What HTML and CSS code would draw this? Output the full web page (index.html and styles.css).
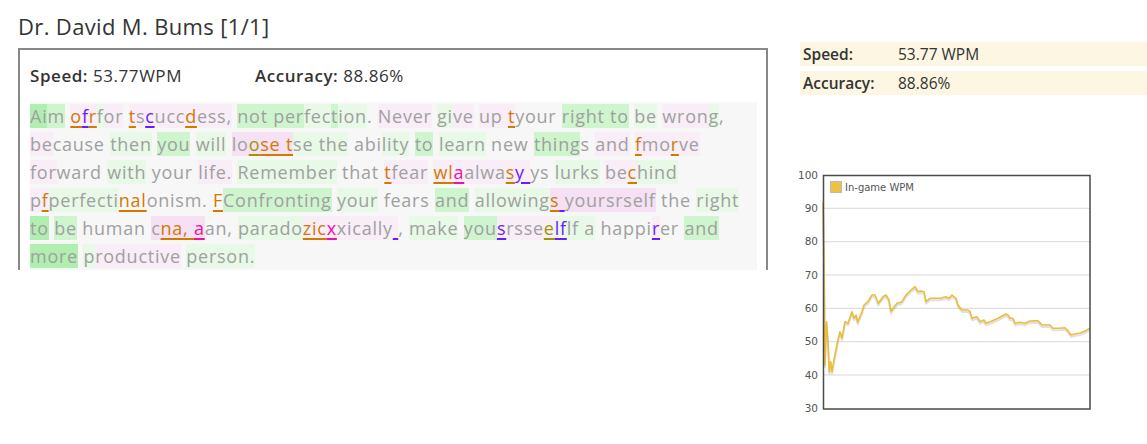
FILE: index.html
```html
<!DOCTYPE html>
<html>
<head>
<meta charset="utf-8">
<link rel="stylesheet" href="styles.css">
</head>
<body>
<div class="page">
  <div class="left">
    <h1 class="title">Dr. David M. Bums [1/1]</h1>
    <div class="box">
      <div class="stats">
        <div class="stat"><span class="lbl">Speed:</span> 53.77WPM</div>
        <div class="stat"><span class="lbl">Accuracy:</span> 88.86%</div>
      </div>
      <div class="text">
        <div class="line"><span class="g3">Ai</span><span class="g2">m</span> <span class="p1"><u class="o">o</u><u class="v">f</u><u class="o">r</u></span><span class="g1">f</span><span class="p1">or</span> <span class="p1"><u class="o">t</u>s<u class="v">c</u>ucc<u class="o">d</u>ess,</span> <span class="g2">not </span><span class="g2">per</span><span class="g1">fec</span><span class="g2">t</span><span class="g1">ion</span>. <span class="p1">Never</span> <span class="g1">gi</span><span class="p1">ve</span> <span class="p1">up <u class="o">t</u></span>your <span class="g2">right to</span> <span class="g1">be</span> <span class="p1">wron</span><span class="g1">g</span>,</div>
        <div class="line"><span class="p1">be</span>cause <span class="g1">then</span> <span class="g2">you</span> <span class="g1">will</span> <span class="p2">lo<u class="y">o</u><u class="o">se t</u></span><span class="g1">se the</span> abi<span class="g1">lity</span> <span class="g2">to</span> <span class="g1">learn</span> new <span class="g2">thing</span>s <span class="p1">and</span> <span class="p1"><u class="o">f</u>mo<u class="o">r</u>ve</span></div>
        <div class="line"><span class="p1">for</span>ward <span class="g1">with</span> your <span class="p1">life.</span> <span class="g1">Remember</span> that <span class="p1"><u class="o">t</u>fear</span> <span class="p1"><u class="o">wl</u><u class="m">a</u>alwa<u class="o">s</u><u class="v">y </u></span>ys <span class="g1">lurks</span> <span class="p1">be<u class="o">c</u></span><span class="g1">hind</span></div>
        <div class="line"><span class="p1">p<u class="o">f</u></span><span class="g1">perfecti</span><u class="o">nal</u>onism. <u class="o">F</u><span class="g2">Confronting</span> <span class="g1">your</span> fears <span class="g2">and</span> <span class="g1">allowing</span><span class="p2"><u class="o">s</u><u class="v"> </u>yoursrself</span> the <span class="g1">right</span></div>
        <div class="line"><span class="g3">to</span> <span class="g2">be</span> human <span class="p2">c<u class="o">na, </u><u class="m">a</u></span>an, <span class="g1">parado</span><span class="p1"><u class="o">zic</u><u class="m">x</u>xically<u class="v"> </u></span>, <span class="g1">make</span> <span class="g2">you</span><span class="p1"><u class="v">s</u>rsse<u class="y">e</u></span><span class="g1"><u class="v">lf</u>lf a</span> happi<span class="p1"><u class="v">r</u></span>er <span class="g2">and</span></div>
        <div class="line"><span class="g3">more</span> <span class="g1">p</span><span class="p1">roductive</span> <span class="g1">person.</span></div>
      </div>
    </div>
  </div>
  <div class="right">
    <div class="row"><span class="rl">Speed:</span><span class="rv">53.77 WPM</span></div>
    <div class="row"><span class="rl">Accuracy:</span><span class="rv">88.86%</span></div>
    <svg class="chart" width="300" height="260" viewBox="795 165 300 260">
      <g class="grid">
        <line x1="823" y1="208.3" x2="1090" y2="208.3"/>
        <line x1="823" y1="241.7" x2="1090" y2="241.7"/>
        <line x1="823" y1="275" x2="1090" y2="275"/>
        <line x1="823" y1="308.3" x2="1090" y2="308.3"/>
        <line x1="823" y1="341.7" x2="1090" y2="341.7"/>
        <line x1="823" y1="375" x2="1090" y2="375"/>
      </g>
      <g class="ylab">
        <text x="818" y="178.5">100</text>
        <text x="818" y="211.8">90</text>
        <text x="818" y="245.2">80</text>
        <text x="818" y="278.5">70</text>
        <text x="818" y="311.8">60</text>
        <text x="818" y="345.2">50</text>
        <text x="818" y="378.5">40</text>
        <text x="818" y="411.8">30</text>
      </g>
      <polyline class="shadow" points="823,203.7 824,260 825,367 826.5,323.7 828,343.7 829.3,373.7 830.7,363.7 832,373.7 835,357 838,342 840,333.7 842,340.3 845,323.7 848,325.3 852,313.7 854,320.3 856,317 857.7,324.3 862,313.7 864,307 868,303.7 872,297 875,297 877,302 878.5,305.3 883,298.7 886,297 889,302 891,313.7 893,310.3 897,305.3 902,303.7 906,297 911,292 915,288.7 918,293.7 921,293 924,293.7 926,303.7 930,300.3 940,300.3 946,298.7 949,300.3 952,297 956,300.3 958,307 962,312 968,312 970,313.7 972,320.3 977,318.7 980,323.7 984,322 986,325.3 992,323 998,320.3 1006,316 1008,317 1010,320.3 1013,320.3 1015,325.3 1020,324.3 1025,325.3 1030,323 1038,322.7 1042,327 1050,327 1053,330.3 1060,330.3 1065,329.7 1068,332.7 1071,337 1075,336 1080,335 1085,333 1090,330.3"/>
      <polyline class="series" points="823,201.7 824,258 825,365 826.5,321.7 828,341.7 829.3,371.7 830.7,361.7 832,371.7 835,355 838,340 840,331.7 842,338.3 845,321.7 848,323.3 852,311.7 854,318.3 856,315 857.7,322.3 862,311.7 864,305 868,301.7 872,295 875,295 877,300 878.5,303.3 883,296.7 886,295 889,300 891,311.7 893,308.3 897,303.3 902,301.7 906,295 911,290 915,286.7 918,291.7 921,291 924,291.7 926,301.7 930,298.3 940,298.3 946,296.7 949,298.3 952,295 956,298.3 958,305 962,310 968,310 970,311.7 972,318.3 977,316.7 980,321.7 984,320 986,323.3 992,321 998,318.3 1006,314 1008,315 1010,318.3 1013,318.3 1015,323.3 1020,322.3 1025,323.3 1030,321 1038,320.7 1042,325 1050,325 1053,328.3 1060,328.3 1065,327.7 1068,330.7 1071,335 1075,334 1080,333 1085,331 1090,328.3"/>
      <rect class="frame" x="823.5" y="175.5" width="266.5" height="233.5"/>
      <rect class="swatch" x="830.5" y="181.5" width="11" height="11"/>
      <text class="legend" x="845" y="191">In-game WPM</text>
    </svg>
  </div>
</div>
</body>
</html>
```

FILE: styles.css
```css
* { box-sizing: border-box; }
html, body { margin: 0; padding: 0; background: #fff; }
body { font-family: "Open Sans", "Liberation Sans", sans-serif; color: #333; }
.page { display: flex; align-items: flex-start; padding-left: 18px; }
.left { width: 750px; flex: none; }
.title {
  margin: 0;
  padding-top: 11px;
  height: 48px;
  font-size: 22px;
  font-weight: 400;
  letter-spacing: 0.35px;
  line-height: 30px;
  color: #333;
}
.box {
  border: 2px solid #888;
  border-bottom: 0;
  padding: 0 9px 0 10px;
}
.stats {
  display: flex;
  height: 52px;
  align-items: center;
  padding-bottom: 2px;
  font-size: 17px;
  letter-spacing: 0.55px;
  color: #333;
}
.stat { width: 225px; }
.lbl { font-weight: 600; }
.text {
  background: #f7f7f7;
  font-size: 18px;
  letter-spacing: 0.75px;
  line-height: 28px;
  color: #a0a0a0;
}
.line { white-space: nowrap; height: 28px; }
.g1 { background: #e8f9e8; }
.g2 { background: #cff5cf; }
.g3 { background: #b0efb0; }
.p1 { background: #f9edf8; }
.p2 { background: #f6e0f4; }
u { text-decoration: underline; text-decoration-thickness: 2px; text-underline-offset: 3px; }
u.o { color: #d17a00; }
u.v { color: #6a1cff; }
u.m { color: #f0119e; }
u.y { color: #9a9a00; }
.right { margin-left: 32px; flex: 1; padding-top: 42px; }
.row {
  display: flex;
  align-items: center;
  height: 24px;
  margin-bottom: 5px;
  background: #fcf6e2;
  padding-left: 3px;
  font-size: 15.5px;
}
.rl { width: 95px; font-weight: 600; color: #333; }
.rv { color: #333; }
.chart { display: block; margin-top: 70px; margin-left: -5px; font-family: "DejaVu Sans", Verdana, sans-serif; }
.grid line { stroke: #d8d8d8; stroke-width: 1; }
.ylab text { font-size: 10.5px; fill: #555; text-anchor: end; }
.frame { fill: none; stroke: #4a4a4a; stroke-width: 1.5; }
.series { fill: none; stroke: #ebbd3a; stroke-width: 1.6; stroke-linejoin: round; }
.shadow { fill: none; stroke: rgba(0,0,0,0.12); stroke-width: 2; stroke-linejoin: round; }
.swatch { fill: #edc240; stroke: #bbb; stroke-width: 1; }
.legend { font-size: 10px; fill: #555; }
```
